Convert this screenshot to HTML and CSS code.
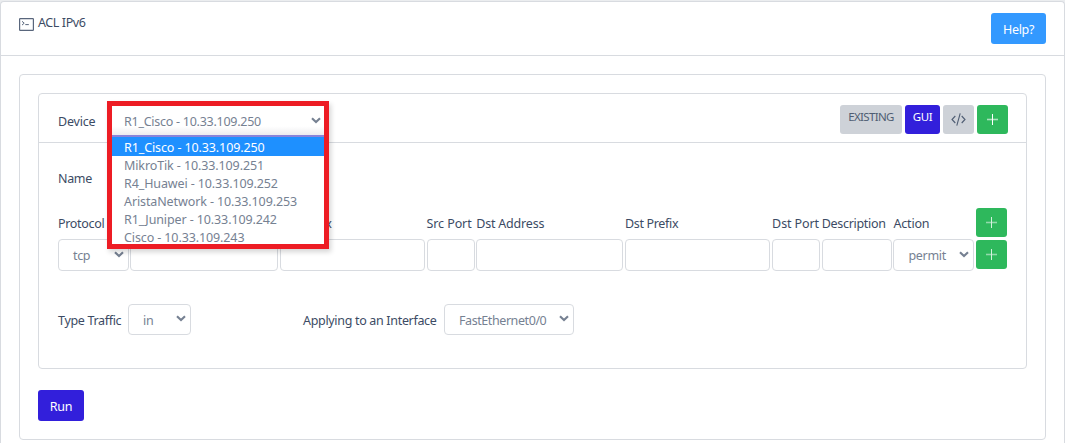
FILE: index.html
```html
<!DOCTYPE html>
<html lang="en">
<head>
<meta charset="utf-8">
<title>ACL IPv6</title>
<link rel="stylesheet" href="styles.css">
</head>
<body>
<svg class="defs" aria-hidden="true">
  <symbol id="chevron" viewBox="0 0 10 7"><path d="M1 1.2l4 3.9 4-3.9" fill="none" stroke="#768192" stroke-width="2.1"/></symbol>
  <symbol id="plus" viewBox="0 0 11 11"><path d="M0 5.5h11" fill="none" stroke="#fff" stroke-width="1.6" opacity=".6"/><path d="M5.5 0v11" fill="none" stroke="#fff" stroke-width="1"/></symbol>
</svg>
<main class="page-card">
  <header class="page-header">
    <h1 class="title">
      <svg class="terminal" viewBox="0 0 15 13"><rect x=".6" y=".6" width="13.8" height="11.8" rx=".6"/><path d="M3 3.3l2.2 1.9L3 7.1M6.3 6.6h3.5"/></svg>
      <span>ACL IPv6</span>
    </h1>
    <button class="btn help">Help?</button>
  </header>
  <section class="panel">
    <div class="acl-card">
      <div class="acl-header">
        <label>Device</label>
        <div class="device">
          <div class="device-value"><span>R1_Cisco - 10.33.109.250</span><svg class="chev"><use href="#chevron"/></svg></div>
          <ul class="options">
            <li class="active">R1_Cisco - 10.33.109.250</li>
            <li>MikroTik - 10.33.109.251</li>
            <li>R4_Huawei - 10.33.109.252</li>
            <li>AristaNetwork - 10.33.109.253</li>
            <li>R1_Juniper - 10.33.109.242</li>
            <li>Cisco - 10.33.109.243</li>
          </ul>
        </div>
        <div class="modes">
          <button class="mode existing">EXISTING</button>
          <button class="mode gui">GUI</button>
          <button class="mode square"><svg class="code" viewBox="0 0 15 13"><path d="M4.3 3L1 6.5 4.3 10M10.7 3L14 6.5 10.7 10M9.2 .3L5.8 12.7"/></svg></button>
          <button class="mode square add"><svg class="plus"><use href="#plus"/></svg></button>
        </div>
      </div>
      <div class="acl-body">
        <div class="name-row">Name</div>
        <div class="rules labels">
          <span>Protocol</span><span></span><span>Src Prefix</span><span class="t-port">Src Port</span><span class="t-address">Dst Address</span><span>Dst Prefix</span><span class="t-port">Dst Port</span><span>Description</span><span class="t-action">Action</span>
          <button class="mode square add soft"><svg class="plus"><use href="#plus"/></svg></button>
        </div>
        <div class="rules fields">
          <div class="field select"><span>tcp</span><svg class="chev"><use href="#chevron"/></svg></div>
          <div class="field"></div><div class="field"></div><div class="field"></div><div class="field"></div><div class="field"></div><div class="field"></div><div class="field"></div>
          <div class="field select"><span>permit</span><svg class="chev"><use href="#chevron"/></svg></div>
          <button class="mode square add soft"><svg class="plus"><use href="#plus"/></svg></button>
        </div>
        <div class="traffic">
          <label class="traffic-label">Type Traffic</label>
          <div class="field select direction"><span>in</span><svg class="chev"><use href="#chevron"/></svg></div>
          <label class="interface-label">Applying to an Interface</label>
          <div class="field select interface"><span>FastEthernet0/0</span><svg class="chev"><use href="#chevron"/></svg></div>
        </div>
      </div>
    </div>
    <button class="btn run">Run</button>
  </section>
</main>
</body>
</html>
```
FILE: styles.css
```css
* { box-sizing: border-box; }
body {
  margin: 0;
  height: 443px;
  overflow: hidden;
  padding-top: 1px;
  background: #ebedef;
  color: #3c4b64;
  font: 12.5px/18px "Noto Sans", "Open Sans", sans-serif;
  letter-spacing: -.32px;
}
.defs { position: absolute; width: 0; height: 0; }
button { border: 0; padding: 0; font: inherit; letter-spacing: inherit; }
.page-card {
  height: 442px;
  border: 1px solid #d8dbe0;
  border-bottom: 0;
  border-radius: 4px 4px 0 0;
  background: #fff;
}
.page-header {
  display: flex;
  justify-content: space-between;
  height: 54px;
  padding: 11px 18px 0;
  border-bottom: 1px solid #d8dbe0;
}
.title { display: flex; height: 20px; margin: 0; gap: 4px; font-size: 12.5px; font-weight: 400; }
.title span { margin-top: 1px; letter-spacing: -.4px; }
.terminal { width: 15px; height: 13px; margin-top: 5px; fill: none; stroke: #59667c; stroke-width: 1.2; }
.terminal path { stroke-width: 1; }
.btn { height: 31px; border-radius: 3px; color: #fff; }
.help { width: 55px; padding-top: 2px; background: #39f; }
.panel {
  height: 366px;
  margin: 18px 18px 0;
  padding: 18px;
  border: 1px solid #d8dbe0;
  border-radius: 4px;
}
.acl-card { height: 276px; border: 1px solid #d8dbe0; border-radius: 4px; }
.acl-header {
  display: flex;
  position: relative;
  height: 49px;
  padding: 11px 18px 0 19px;
  border-bottom: 1px solid #d8dbe0;
}
.acl-header > label { margin-top: 8px; letter-spacing: -.2px; }
.device {
  position: absolute;
  left: 68px;
  top: 7px;
  width: 222px;
  height: 148px;
  border: 5px solid #ed1c24;
  background: #fff;
  box-shadow: 2px 3px 5px rgba(0,0,0,.17);
}
.device-value {
  display: flex;
  align-items: center;
  height: 31px;
  padding: 1px 3px 0 12px;
  border-bottom: 2px solid #8983da;
  background: linear-gradient(#fff 70%, #ececef);
  color: #768192;
  letter-spacing: -.26px;
}
.device-value span { padding-top: 2px; }
.device-value .chev { margin-bottom: 2px; }
.chev { width: 10px; height: 7px; margin-left: auto; flex: none; }
.options { margin: 0; padding: 0; list-style: none; color: #768192; height: 107px; overflow: hidden; letter-spacing: -.11px; }
.options li { height: 18px; padding-left: 12px; line-height: 19px; white-space: nowrap; }
.options li:last-child { height: 16px; }
.options .active { height: 19px; line-height: 21px; background: #1e90ff; color: #fff; }
.modes { display: flex; margin-left: auto; gap: 3px; }
.mode { height: 29px; border-radius: 3px; background: #ced2d8; color: #4f5d73; font-size: 11.5px; }
.existing { width: 62px; padding-bottom: 5px; letter-spacing: -.65px; }
.gui { width: 35px; padding-bottom: 5px; background: #321fdb; color: #fff; }
.square { display: flex; align-items: center; justify-content: center; width: 31px; }
.add { background: #2eb85c; }
.soft svg { opacity: .8; }
.code { width: 15px; height: 13px; fill: none; stroke: #4f5d73; stroke-width: 1.1; }
.plus { width: 11px; height: 11px; }
.acl-body { padding: 27px 19px 0; }
.name-row { height: 38px; }
.rules {
  display: grid;
  grid-template-columns: 70.5px 148.3px 144.7px 48px 147px 145.5px 48px 70px 81px 31px;
  column-gap: 1.7px;
}
.labels { height: 31px; align-items: center; white-space: nowrap; }
.labels span { padding-top: 1px; }
.labels .add { margin-top: -2px; }
.labels .t-port { letter-spacing: -.1px; }
.labels .t-address { letter-spacing: -.2px; }
.labels .t-action { letter-spacing: -.2px; }
.field { display: flex; align-items: center; height: 32px; border: 1px solid #d8dbe0; border-radius: 4px; background: #fff; color: #768192; }
.fields .add { margin-top: 1px; }
.select { padding: 0 4px 0 14px; }
.select span { padding-top: 2px; }
.select .chev { margin-bottom: 2px; }
.traffic { display: flex; align-items: center; margin-top: 33px; }
.traffic label { padding-top: 2px; }
.traffic .field { height: 31px; }
.traffic-label { width: 70px; white-space: nowrap; }
.direction { width: 63px; }
.interface-label { width: 141px; margin-left: 112px; white-space: nowrap; }
.interface { width: 130px; }
.interface span { letter-spacing: -.42px; }
.run { width: 46px; margin-top: 21px; padding-top: 2px; background: #321fdb; }
```
